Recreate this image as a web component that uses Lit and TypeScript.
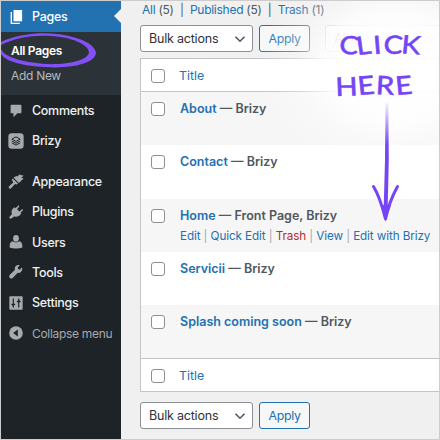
import { LitElement, html, svg, css } from "lit";
import { customElement, property } from "lit/decorators.js";

const icons: Record<string, unknown> = {
  pages: svg`<path d="M7.2 2.2h9.6v12.6H7.2z" fill="#fff"/><path d="M5.6 4.4v12h8.6v1.4H4V4.4z" fill="#fff"/>`,
  comments: svg`<path d="M5 3h10a1 1 0 0 1 1 1v7.6a1 1 0 0 1-1 1h-3.4L7.2 17v-4.4H5a1 1 0 0 1-1-1V4a1 1 0 0 1 1-1z"/>`,
  brizy: svg`<rect x="1.5" y="1.5" width="17" height="17" rx="3.6"/><g fill="none" stroke="#1d2327" stroke-width="1.1" stroke-linejoin="round"><path d="M10 5.3 14.6 7.9 10 10.5 5.4 7.9z"/><path d="M5.4 10 10 12.6 14.6 10M5.4 12 10 14.6 14.6 12"/></g>`,
  appearance: svg`<path d="M13.4 1.8 18.6 3 15.8 5.1 18.4 6 13.2 11 7.2 5.1 10.6 3.2 12 4z"/><path d="M6.4 6 12.2 11.7 10.8 12.8 8.9 12.2 4.6 17C3 18.2 1 16.4 2.3 14.7L7 10.5 5.4 7.6z"/>`,
  plugins: svg`<path d="M12.2 3.2c.8-.8 1.9.2 1.2 1.1l-2.2 2.6 2.6 2.5 2.6-2.2c.9-.7 1.9.4 1.1 1.2l-2.5 2.5.9 1-1.5 1.5c-1.9 1.9-4.4 2.2-6.3 1.2L5.9 16.8c-1 .8-3.1.5-3.4-.1.2-1.3.8-2.5 1.8-2.8l1.2-1.7C4.5 10 5 8 6.7 6.2l1.4-1.4 1.2 1.1z"/>`,
  users: svg`<ellipse cx="10" cy="6" rx="3.2" ry="3.8"/><path d="M6.4 9.3C7.5 11 12.5 11 13.6 9.3c2.2.7 3.4 2.2 3.4 4.5v2.2c-4 1.5-10 1.5-14 0v-2.2c0-2.3 1.2-3.8 3.4-4.5z"/>`,
  tools: svg`<path d="M16.7 6.7c.5-1 .4-2-.1-2.8l-2.3 2.3-1.9-.5-.5-1.9 2.3-2.3c-1.8-.6-3.6-.2-4.6 1-1 1.1-1.2 2.6-.7 3.9L3.2 12c-1.5 1.4-.6 4.4 1.7 4.2.5 0 1-.3 1.4-.7l5.6-5.7c2 .6 4-.5 4.8-3.1z"/>`,
  settings: svg`<rect x="2.6" y="2.6" width="14.8" height="14.8" rx="1"/><path d="M7 5v7M5 11.5h4M7 12v3M13 5v10M11 8.5h4" stroke="#1d2327" stroke-width="1.3" fill="none"/><path d="M4.9 11h4.2L7 13.8zM10.9 8.5h4.2L13 5.7z" fill="#1d2327"/>`,
  collapse: svg`<circle cx="10" cy="10" r="7.6"/><path d="M12 6v8l-5.2-4z" fill="#1d2327"/>`,
};

@customElement("menu-icon")
class MenuIcon extends LitElement {
  @property() name = "";
  static styles = css`
    :host { display: block; width: 18px; height: 18px; flex: none; }
    svg { display: block; width: 18px; height: 18px; fill: #a7aaad; }
  `;
  render() {
    return html`<svg viewBox="0 0 20 20">${icons[this.name]}</svg>`;
  }
}

@customElement("bulk-bar")
class BulkBar extends LitElement {
  @property({ type: Boolean }) filter = false;
  static styles = css`
    :host { display: flex; height: 27px; gap: 6px; font-size: 12.5px; overflow: hidden; }
    .select { box-sizing: border-box; width: 113px; flex: none; display: flex; align-items: center; justify-content: space-between;
      padding: 0 6px 0 8px; border: 1px solid #8c8f94; border-radius: 3px; background: #fff; color: #2c3338; letter-spacing: -0.2px; }
    .date { margin-left: 9px; width: 118px; opacity: .4; }
    .apply { box-sizing: border-box; width: 51px; flex: none; display: flex; align-items: center; justify-content: center;
      border: 1px solid #2271b1; border-radius: 3px; background: #f6f7f7; color: #2271b1; letter-spacing: -0.3px; font-size: 12.3px; }
    svg { width: 12px; height: 12px; fill: none; stroke: #50575e; stroke-width: 1.6; }
  `;
  render() {
    const chevron = html`<svg viewBox="0 0 12 12"><path d="M1.5 3.8 6 8.2 10.5 3.8" /></svg>`;
    return html`<div class="select"><span>Bulk actions</span>${chevron}</div>
      <div class="apply">Apply</div>
      ${this.filter ? html`<div class="select date"><span>All dates</span>${chevron}</div>` : ""}`;
  }
}

@customElement("app-root")
class AppRoot extends LitElement {
  static styles = css`
    :host { display: block; position: relative; box-sizing: border-box; width: 440px; height: 440px; overflow: hidden;
      border: 1px solid #cdcdcd; background: #f0f0f0; font-family: Inter, "Liberation Sans", sans-serif; font-size: 12.5px; color: #50575e; }
    .screen { display: flex; height: 438px; }
    .side { width: 120px; flex: none; background: #1d2327; color: #f0f0f1; }
    .item { display: flex; align-items: center; gap: 7px; height: 30.3px; padding-left: 6px; font-size: 12.5px; font-weight: 500; letter-spacing: -0.3px; white-space: nowrap; }
    .current { position: relative; height: 31px; background: #2271b1; color: #fff; }
    .current::after { content: ""; position: absolute; right: 0; top: 8px; border: 7px solid transparent; border-right-color: #f0f0f0; border-left: 0; }
    .sub { height: 63.4px; background: #2c3338; box-sizing: border-box; padding: 6px 0 0 10px; }
    .sub div { height: 25px; line-height: 25px; font-size: 12px; letter-spacing: -0.3px; color: #b4b9be; }
    .sub .active { color: #fff; font-weight: 600; }
    .space { height: 10.5px; }
    .collapse { color: #a7aaad; font-size: 12px; font-weight: 400; }
    .main { width: 318px; padding-left: 19px; box-sizing: border-box; }
    .views { display: flex; height: 24px; padding: 1px 0 0 2px; box-sizing: border-box; line-height: 16px; font-size: 12px; letter-spacing: -0.26px; white-space: pre; }
    a { color: #2271b1; }
    .table { box-sizing: border-box; height: 334px; margin: 6px 0 10px; border: 1px solid #c3c4c7; border-right: 0; background: #fff; }
    .head, .row { display: grid; grid-template-columns: 39px 1fr; box-sizing: border-box; }
    .head { height: 33px; align-items: center; font-size: 12.3px; border-bottom: 1px solid #c3c4c7; grid-template-columns: 38px 1fr; }
    .foot { border-bottom: 0; border-top: 1px solid #c3c4c7; }
    .row { height: 53.3px; padding-top: 9px; }
    .row:nth-child(even) { background: #f6f6f6; }
    .box { box-sizing: border-box; width: 14px; height: 14px; margin: 1px 0 0 10px; border: 1px solid #8c8f94; border-radius: 3px; background: #fff; }
    .title { font-weight: 600; font-size: 12.5px; line-height: 16px; white-space: nowrap; }
    .actions { display: flex; margin-top: 5px; font-size: 11.7px; line-height: 15px; letter-spacing: -0.1px; white-space: pre; color: #a7aaad; }
    .trash { color: #b32d2e; }
    .glow { position: absolute; inset: 0; background: radial-gradient(ellipse 138px 108px at 394px 66px, rgba(255,255,255,.94) 0 38%, rgba(255,255,255,.8) 52%, rgba(255,255,255,.3) 72%, transparent); }
    .notes { position: absolute; left: -1px; top: -1px; width: 440px; height: 440px; }
    .hand { fill: #7545f5; stroke: #7545f5; stroke-width: .6px; font-family: Lato, sans-serif; font-weight: 400; }
    .stroke { fill: none; stroke: #7545f5; stroke-linecap: round; stroke-linejoin: round; }
  `;

  item(name: string, label: string, cls = "") {
    return html`<div class="item ${cls}"><menu-icon name=${name}></menu-icon><span>${label}</span></div>`;
  }

  row(title: string, state: string, actions = false) {
    return html`<div class="row"><div class="box"></div><div>
      <div class="title"><a>${title}</a> — ${state}</div>
      ${actions ? html`<div class="actions"><a>Edit</a> | <a>Quick Edit</a> | <a class="trash">Trash</a> | <a>View</a> | <a>Edit with Brizy</a></div>` : ""}
    </div></div>`;
  }

  render() {
    return html`
      <div class="screen">
        <nav class="side">
          ${this.item("pages", "Pages", "current")}
          <div class="sub"><div class="active">All Pages</div><div>Add New</div></div>
          ${this.item("comments", "Comments")}
          ${this.item("brizy", "Brizy")}
          <div class="space"></div>
          ${this.item("appearance", "Appearance")}
          ${this.item("plugins", "Plugins")}
          ${this.item("users", "Users")}
          ${this.item("tools", "Tools")}
          ${this.item("settings", "Settings")}
          ${this.item("collapse", "Collapse menu", "collapse")}
        </nav>
        <main class="main">
          <div class="views"><a>All</a> (5)  |  <a>Published</a> (5)  |  <a>Trash</a> (1)</div>
          <bulk-bar filter></bulk-bar>
          <div class="table">
            <div class="head"><div class="box"></div><a>Title</a></div>
            ${this.row("About", "Brizy")}
            ${this.row("Contact", "Brizy")}
            ${this.row("Home", "Front Page, Brizy", true)}
            ${this.row("Servicii", "Brizy")}
            ${this.row("Splash coming soon", "Brizy")}
            <div class="head foot"><div class="box"></div><a>Title</a></div>
          </div>
          <bulk-bar></bulk-bar>
        </main>
      </div>
      <div class="glow"></div>
      <svg class="notes" viewBox="0 0 440 440">
        <defs><linearGradient id="fade" gradientUnits="userSpaceOnUse" x1="0" y1="100" x2="0" y2="145">
          <stop offset="0" stop-color="#7545f5" stop-opacity="0" /><stop offset="1" stop-color="#7545f5" />
        </linearGradient></defs>
        <g transform="scale(1.14 1)">
          <text class="hand" font-size="25" x="297 313.5 328 336 351.5" y="53 55 54 53 53" rotate="6 -7 -4 4 5">CLICK</text>
          <text class="hand" font-size="25.5" x="294.5 314.5 329.5 347.5" y="96 95 94 95" rotate="-2 -5 3 -5">HERE</text>
        </g>
        <path d="M385.5 103 388.3 103 388.8 160 387.5 215 383.5 215 385 160z" fill="url(#fade)" />
        <path class="stroke" stroke-width="3" d="M373.5 186.5Q380 197 385.5 219Q389 202 397.5 186.5" />
        <path d="M380.5 205 385.5 221.5 391 205z" fill="#7545f5" />
        <path fill="#8250f5" fill-rule="evenodd" d="M1 42C18 34 40 32 57 34C80 37 95 44 96 53C95 63 72 69 45 67C22 66 5 61 1 54V49C4 57 22 62 45 64C69 65 89 60 89 52C88 44 71 37 51 36C32 35 15 38 1 45z" />
      </svg>`;
  }
}
